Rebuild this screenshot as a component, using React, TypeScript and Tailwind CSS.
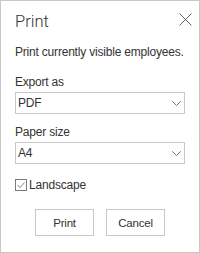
import { useState } from 'react'

const bodyFont = { fontFamily: '"Liberation Sans", Arial, sans-serif' }
const titleFont = { fontFamily: 'Roboto, "Noto Sans", sans-serif' }

function Chevron() {
  return (
    <svg width="9" height="5" viewBox="0 0 9 5" fill="none" className="text-[#666]">
      <path d="M0.3 0.3 L4.5 4.5 L8.7 0.3" stroke="currentColor" strokeWidth="0.9" />
    </svg>
  )
}

function SelectBox({ value }: { value: string }) {
  return (
    <div className="flex h-[22px] items-center justify-between border border-[#c8c8c8] pl-[2px] pr-[3px] text-[12px] tracking-[-0.2px] text-[#333]">
      <span>{value}</span>
      <Chevron />
    </div>
  )
}

export default function App() {
  const [landscape, setLandscape] = useState(true)

  return (
    <div
      style={bodyFont}
      className="flex h-[253px] w-[200px] flex-col border border-[#c8c8c8] bg-white px-[14px] text-[12px] leading-[16px] tracking-[-0.2px] text-[#333]"
    >
      <div className="mt-[9px] flex items-start justify-between">
        <h1 style={titleFont} className="text-[16.5px] font-light leading-[24px] tracking-normal text-[#333]">
          Print
        </h1>
        <button className="mr-[-7px] mt-[3px] text-[#666]">
          <svg width="13" height="13" viewBox="0 0 13 13" fill="none">
            <path d="M0.5 0.5 L12.5 12.5 M12.5 0.5 L0.5 12.5" stroke="currentColor" strokeWidth="1" />
          </svg>
        </button>
      </div>

      <p className="mt-[10px]">Print currently visible employees.</p>

      <label className="mt-[14px] block">Export as</label>
      <div className="mt-[2px]">
        <SelectBox value="PDF" />
      </div>

      <label className="mt-[10px] block">Paper size</label>
      <div className="mt-[2px]">
        <SelectBox value="A4" />
      </div>

      <label className="mt-[13px] flex items-center gap-[2px]">
        <button
          onClick={() => setLandscape(!landscape)}
          className="flex h-[12px] w-[12px] items-center justify-center border border-[#7a7a7a]"
        >
          {landscape ? (
            <svg width="10" height="10" viewBox="0 0 10 10" fill="none" className="text-[#777]">
              <path d="M1.5 5 L4 7.5 L8.5 2.5" stroke="currentColor" strokeWidth="0.9" />
            </svg>
          ) : null}
        </button>
        <span>Landscape</span>
      </label>

      <div className="mt-[16px] flex justify-center gap-[12px]">
        <button className="h-[27px] w-[59px] border border-[#c8c8c8] bg-white text-[11.5px] tracking-[-0.2px] text-[#333]">
          Print
        </button>
        <button className="h-[27px] w-[59px] border border-[#c8c8c8] bg-white text-[11.5px] tracking-[-0.2px] text-[#333]">
          Cancel
        </button>
      </div>
    </div>
  )
}
